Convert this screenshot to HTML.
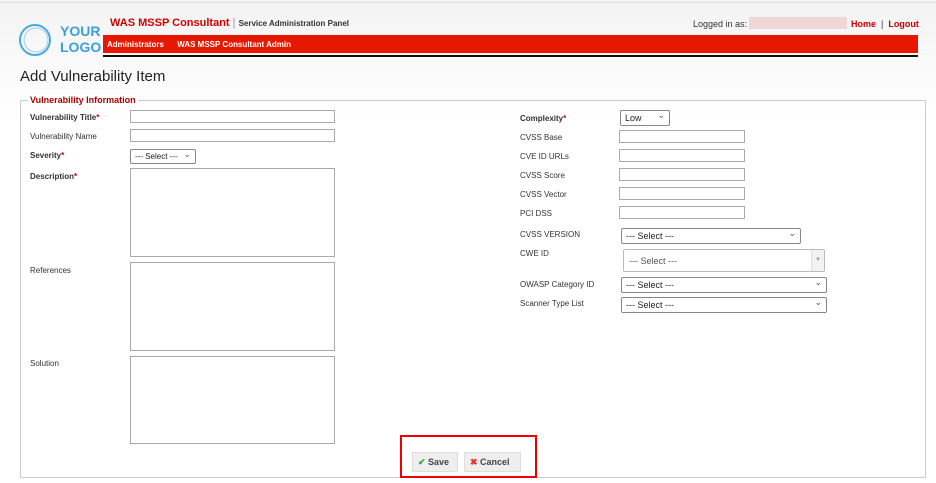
<!DOCTYPE html><html><head><style>
body{margin:0;width:936px;height:483px;background:linear-gradient(#f3f3f3,#fff 120px);font-family:"Liberation Sans",sans-serif;position:relative;overflow:hidden}
.a{position:absolute}
.l{position:absolute;font-size:8px;color:#333}
.b{font-weight:bold}
.r{color:#c00}
.i{position:absolute;height:13px;border:1px solid #aaa;background:#fff;box-sizing:border-box}
.s{position:absolute;border:1px solid #888;border-radius:2px;background:#fff;box-sizing:border-box;font-size:9px;padding:2px 4px;color:#222}
.s:after{content:"⌄";position:absolute;right:4px;top:-1px;font-size:9px;color:#555}
.t{position:absolute;border:1px solid #aaa;background:#fff;box-sizing:border-box;width:205px;left:130px}
</style></head><body>
<div class="a" style="left:0;top:2px;width:936px;height:1px;background:#ddd"></div>
<svg class="a" style="left:18px;top:22px" width="34" height="36"><circle cx="17" cy="18" r="15" fill="none" stroke="#4aa8e0" stroke-width="2"/><circle cx="18" cy="18" r="12" fill="none" stroke="#9cd0ef" stroke-width="1"/></svg>
<div class="a b" style="left:60px;top:23px;font-size:14px;color:#3a9fe0;line-height:16px">YOUR<br>LOGO</div>
<div class="a" style="left:110px;top:17px;font-size:11px"><b style="color:#d10000">WAS MSSP Consultant</b> <span style="color:#999">|</span> <b style="font-size:8px;color:#333">Service Administration Panel</b></div>
<div class="a" style="left:693px;top:19px;font-size:9px;color:#333">Logged in as:</div>
<div class="a" style="left:749px;top:17px;width:98px;height:12px;background:#f0d6d6"></div>
<div class="a b" style="left:851px;top:19px;font-size:9px;color:#c00">Home <span style="color:#333;font-weight:normal">&nbsp;|&nbsp;</span> Logout</div>
<div class="a" style="left:103px;top:35px;width:815px;height:18px;background:#e81800"></div>
<div class="a b" style="left:107px;top:40px;font-size:8px;color:#fff">Administrators &nbsp;&nbsp;&nbsp;&nbsp; WAS MSSP Consultant Admin</div>
<div class="a" style="left:103px;top:55px;width:815px;height:2px;background:#111"></div>
<div class="a" style="left:20px;top:68px;font-size:15px;color:#222">Add Vulnerability Item</div>
<div class="a" style="left:20px;top:100px;width:906px;height:378px;border:1px solid #ccc;box-sizing:border-box"></div>
<div class="a b" style="left:28px;top:95px;font-size:9px;color:#a00;background:#fff;padding:0 2px">Vulnerability Information</div>
<div class="l b" style="left:30px;top:113px">Vulnerability Title<span class="r">*</span></div><div class="i" style="left:130px;top:110px;width:205px"></div>
<div class="l" style="left:30px;top:132px">Vulnerability Name</div><div class="i" style="left:130px;top:129px;width:205px"></div>
<div class="l b" style="left:30px;top:151px">Severity<span class="r">*</span></div><div class="s" style="left:130px;top:149px;width:66px;height:15px;font-size:8px">--- Select ---</div>
<div class="l b" style="left:30px;top:172px">Description<span class="r">*</span></div><div class="t" style="top:168px;height:89px"></div>
<div class="l" style="left:30px;top:266px">References</div><div class="t" style="top:262px;height:89px"></div>
<div class="l" style="left:30px;top:359px">Solution</div><div class="t" style="top:356px;height:88px"></div>
<div class="l b" style="left:520px;top:114px">Complexity<span class="r">*</span></div><div class="s" style="left:620px;top:110px;width:50px;height:16px">Low</div>
<div class="l" style="left:520px;top:133px">CVSS Base</div><div class="i" style="left:619px;top:130px;width:126px"></div>
<div class="l" style="left:520px;top:152px">CVE ID URLs</div><div class="i" style="left:619px;top:149px;width:126px"></div>
<div class="l" style="left:520px;top:171px">CVSS Score</div><div class="i" style="left:619px;top:168px;width:126px"></div>
<div class="l" style="left:520px;top:190px">CVSS Vector</div><div class="i" style="left:619px;top:187px;width:126px"></div>
<div class="l" style="left:520px;top:209px">PCI DSS</div><div class="i" style="left:619px;top:206px;width:126px"></div>
<div class="l" style="left:520px;top:230px">CVSS VERSION</div><div class="s" style="left:621px;top:228px;width:180px;height:16px">--- Select ---</div>
<div class="l" style="left:520px;top:249px">CWE ID</div>
<div class="a" style="left:623px;top:249px;width:202px;height:23px;border:1px solid #bbb;border-radius:2px;background:#fff;box-sizing:border-box;font-size:9px;color:#555;padding:6px 5px">--- Select ---<div class="a" style="right:0;top:0;width:12px;height:21px;border-left:1px solid #ddd;background:#f2f2f2;font-size:6px;color:#999;text-align:center;line-height:21px">▼</div></div>
<div class="l" style="left:520px;top:280px">OWASP Category ID</div><div class="s" style="left:621px;top:277px;width:206px;height:16px">--- Select ---</div>
<div class="l" style="left:520px;top:299px">Scanner Type List</div><div class="s" style="left:621px;top:297px;width:206px;height:16px">--- Select ---</div>
<div class="a" style="left:400px;top:435px;width:137px;height:43px;border:2px solid #e00;box-sizing:border-box;background:#fff"></div>
<div class="a b" style="left:412px;top:452px;width:46px;height:20px;background:#eee;border:1px solid #ddd;box-sizing:border-box;font-size:9px;color:#444;line-height:18px;padding-left:5px"><span style="color:#3a3">✔</span> Save</div>
<div class="a b" style="left:464px;top:452px;width:57px;height:20px;background:#eee;border:1px solid #ddd;box-sizing:border-box;font-size:9px;color:#444;line-height:18px;padding-left:5px"><span style="color:#e33">✖</span> Cancel</div>
</body></html>
